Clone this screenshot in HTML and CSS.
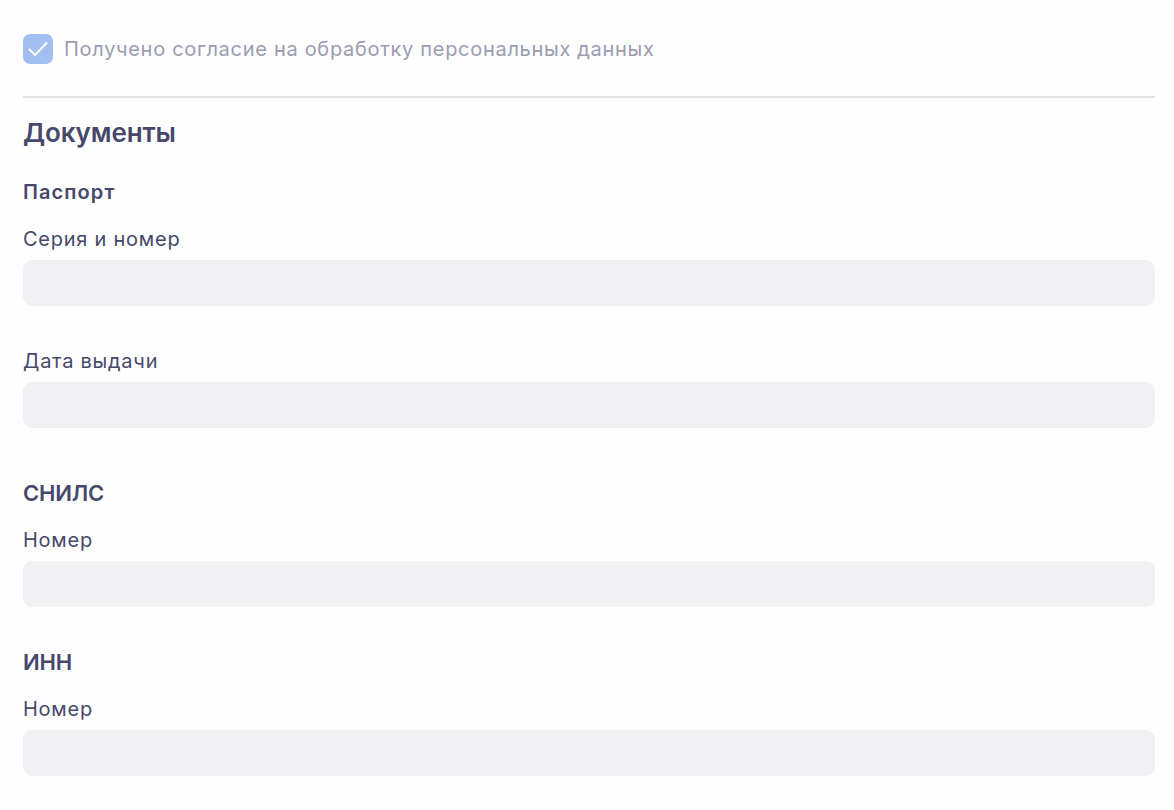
FILE: index.html
```html
<!DOCTYPE html>
<html lang="ru">
<head>
<meta charset="utf-8">
<title>Документы</title>
<link rel="stylesheet" href="styles.css">
</head>
<body>
<main class="page">
  <label class="consent">
    <span class="checkbox">
      <svg width="30" height="30" viewBox="0 0 30 30" aria-hidden="true"><polyline points="6.5,15.5 12,21 23.5,9" fill="none" stroke="#ffffff" stroke-width="1.9" stroke-linecap="round" stroke-linejoin="round"/></svg>
    </span>
    <span class="consent-text">Получено согласие на обработку персональных данных</span>
  </label>
  <hr class="divider">
  <h2 class="title">Документы</h2>
  <section class="section section-passport">
    <h3 class="subtitle">Паспорт</h3>
    <div class="field">
      <div class="label">Серия и номер</div>
      <div class="input"></div>
    </div>
    <div class="field">
      <div class="label">Дата выдачи</div>
      <div class="input"></div>
    </div>
  </section>
  <section class="section">
    <h3 class="heading">СНИЛС</h3>
    <div class="field">
      <div class="label">Номер</div>
      <div class="input"></div>
    </div>
  </section>
  <section class="section">
    <h3 class="heading">ИНН</h3>
    <div class="field">
      <div class="label">Номер</div>
      <div class="input"></div>
    </div>
  </section>
</main>
</body>
</html>
```

FILE: styles.css
```css
* { box-sizing: border-box; }
html, body { margin: 0; padding: 0; background: #fefefe; }
body {
  font-family: Inter, "Noto Sans", sans-serif;
  color: #45486b;
}
.page {
  padding: 34px 19px 0 23px;
  display: flex;
  flex-direction: column;
}
.consent {
  display: flex;
  align-items: center;
  gap: 11px;
  height: 30px;
}
.checkbox {
  width: 30px;
  height: 30px;
  border-radius: 7px;
  background: #a3bef0;
  display: flex;
  flex: none;
}
.consent-text {
  font-size: 20px;
  line-height: 24px;
  color: #9b9cb0;
  letter-spacing: 0.7px;
}
.divider {
  margin: 32px 0 0;
  border: 0;
  height: 2px;
  background: #e2e2e7;
}
.title {
  margin: 19px 0 0;
  font-size: 26px;
  line-height: 32px;
  font-weight: 600;
  letter-spacing: -0.1px;
}
.section {
  display: flex;
  flex-direction: column;
  margin-top: 41px;
}
.section-passport { margin-top: 31px; margin-bottom: 10px; }
.subtitle {
  margin: 0 0 23px;
  font-size: 20px;
  line-height: 24px;
  font-weight: 600;
  letter-spacing: 1.1px;
}
.heading {
  margin: 0 0 21px;
  font-size: 22px;
  line-height: 28px;
  font-weight: 600;
  letter-spacing: -0.2px;
}
.field + .field { margin-top: 43px; }
.label {
  font-size: 20px;
  line-height: 24px;
  letter-spacing: 0.75px;
  margin-bottom: 9px;
}
.input {
  height: 46px;
  border-radius: 9px;
  background: #f1f1f3;
}
```
